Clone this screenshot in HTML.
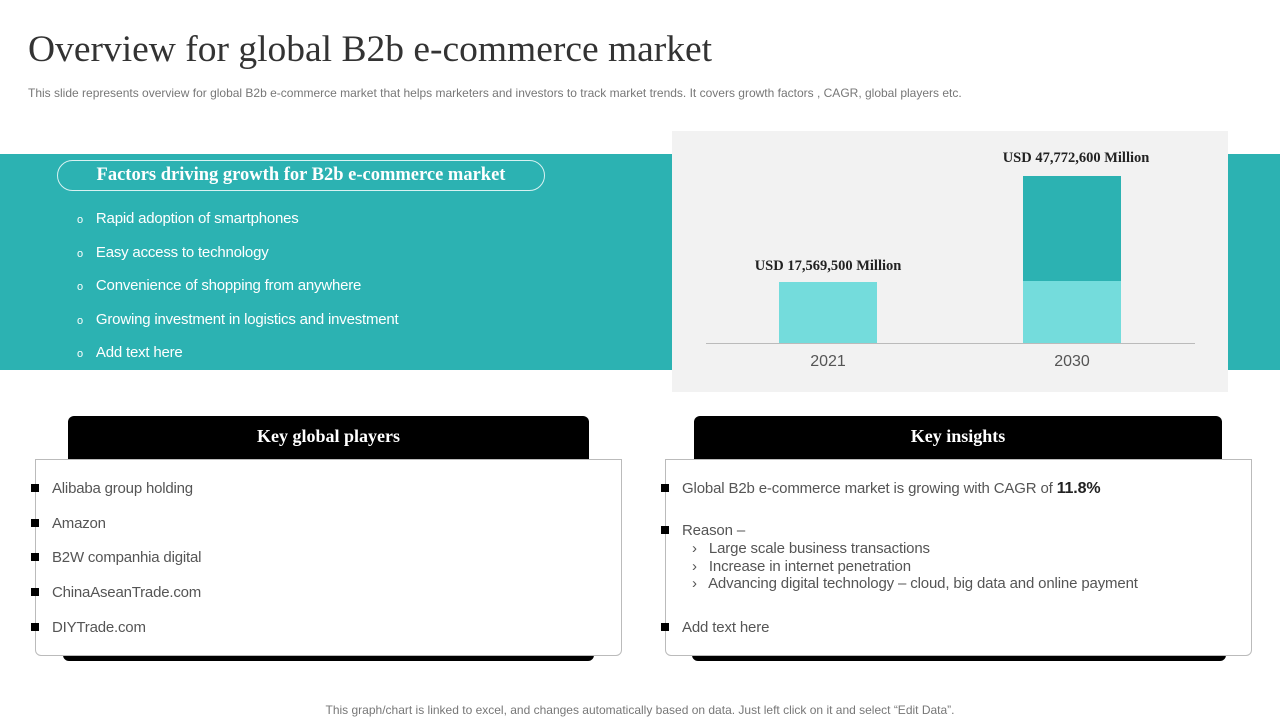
<!DOCTYPE html>
<html><head><style>
*{margin:0;padding:0;box-sizing:border-box}
body{width:1280px;height:720px;background:#fff;position:relative;overflow:hidden;font-family:"Liberation Sans",sans-serif}
.a{position:absolute}
.serif{font-family:"Liberation Serif",serif}
.sq{display:inline-block;width:8px;height:8px;background:#000;margin-right:13px;vertical-align:1px}
</style></head><body>
<div class="a serif" style="left:28px;top:28px;font-size:37.5px;color:#333">Overview for global B2b e-commerce market</div>
<div class="a" style="left:28px;top:86px;font-size:12px;color:#777">This slide represents overview for global B2b e-commerce market that helps marketers and investors to track market trends. It covers growth factors , CAGR, global players etc.</div>

<div class="a" style="left:0;top:154px;width:1280px;height:216px;background:#2cb2b2"></div>
<div class="a serif" style="left:57px;top:160px;width:488px;height:31px;border:1.5px solid #d8f2f2;border-radius:16px;color:#fff;font-weight:bold;font-size:18.5px;text-align:center;line-height:29px">Factors driving growth for B2b e-commerce market</div>
<div class="a" style="left:77px;top:203px;color:#fff;font-size:15px;line-height:32.5px;letter-spacing:-0.2px">
<div><span style="font-size:11px;margin-right:13px">o</span>Rapid adoption of smartphones</div>
<div><span style="font-size:11px;margin-right:13px">o</span>Easy access to technology</div>
<div><span style="font-size:11px;margin-right:13px">o</span>Convenience of shopping from anywhere</div>
<div><span style="font-size:11px;margin-right:13px">o</span>Growing investment in logistics and investment</div>
<div><span style="font-size:11px;margin-right:13px">o</span>Add text here</div>
</div>

<div class="a" style="left:672px;top:131px;width:556px;height:261px;background:#f2f2f2"></div>
<div class="a" style="left:779px;top:282px;width:98px;height:61px;background:#74dcdc"></div>
<div class="a" style="left:1023px;top:176px;width:98px;height:105px;background:#2cb2b2"></div>
<div class="a" style="left:1023px;top:281px;width:98px;height:62px;background:#74dcdc"></div>
<div class="a" style="left:706px;top:343px;width:489px;height:1px;background:#bbb"></div>
<div class="a serif" style="left:728px;top:258px;width:200px;text-align:center;font-weight:bold;font-size:14.5px;color:#222">USD 17,569,500 Million</div>
<div class="a serif" style="left:976px;top:150px;width:200px;text-align:center;font-weight:bold;font-size:14.5px;color:#222">USD 47,772,600 Million</div>
<div class="a" style="left:778px;top:353px;width:100px;text-align:center;font-size:16px;color:#555">2021</div>
<div class="a" style="left:1022px;top:353px;width:100px;text-align:center;font-size:16px;color:#555">2030</div>

<div class="a" style="left:63px;top:630px;width:531px;height:31px;background:#000;border-radius:6px"></div>
<div class="a serif" style="left:68px;top:416px;width:521px;height:44px;background:#000;border-radius:6px 6px 0 0;color:#fff;font-weight:bold;font-size:18px;text-align:center;line-height:40px">Key global players</div>
<div class="a" style="left:35px;top:459px;width:587px;height:197px;background:#fff;border:1px solid #bbb;border-radius:0 0 6px 6px"></div>
<div class="a" style="left:31px;top:472px;font-size:15px;color:#555;line-height:34.7px;letter-spacing:-0.2px">
<div><span class="sq"></span>Alibaba group holding</div>
<div><span class="sq"></span>Amazon</div>
<div><span class="sq"></span>B2W companhia digital</div>
<div><span class="sq"></span>ChinaAseanTrade.com</div>
<div><span class="sq"></span>DIYTrade.com</div>
</div>

<div class="a" style="left:692px;top:630px;width:534px;height:31px;background:#000;border-radius:6px"></div>
<div class="a serif" style="left:694px;top:416px;width:528px;height:44px;background:#000;border-radius:6px 6px 0 0;color:#fff;font-weight:bold;font-size:18px;text-align:center;line-height:40px">Key insights</div>
<div class="a" style="left:665px;top:459px;width:587px;height:197px;background:#fff;border:1px solid #bbb;border-radius:0 0 6px 6px"></div>
<div class="a" style="left:661px;top:480px;font-size:15px;color:#555;letter-spacing:-0.15px">
<div style="height:42px"><span class="sq"></span>Global B2b e-commerce market is growing with CAGR of <b style="color:#222;font-size:16px">11.8%</b></div>
<div style="line-height:18px"><span class="sq"></span>Reason –</div>
<div style="line-height:17.5px;padding-left:31px">›&nbsp;&nbsp; Large scale business transactions<br>›&nbsp;&nbsp; Increase in internet penetration<br>›&nbsp;&nbsp; Advancing digital technology – cloud, big data and online payment</div>
<div style="margin-top:26px"><span class="sq"></span>Add text here</div>
</div>

<div class="a" style="left:0;top:703px;width:1280px;text-align:center;font-size:12px;color:#777">This graph/chart is linked to excel, and changes automatically based on data. Just left click on it and select “Edit Data”.</div>
</body></html>
